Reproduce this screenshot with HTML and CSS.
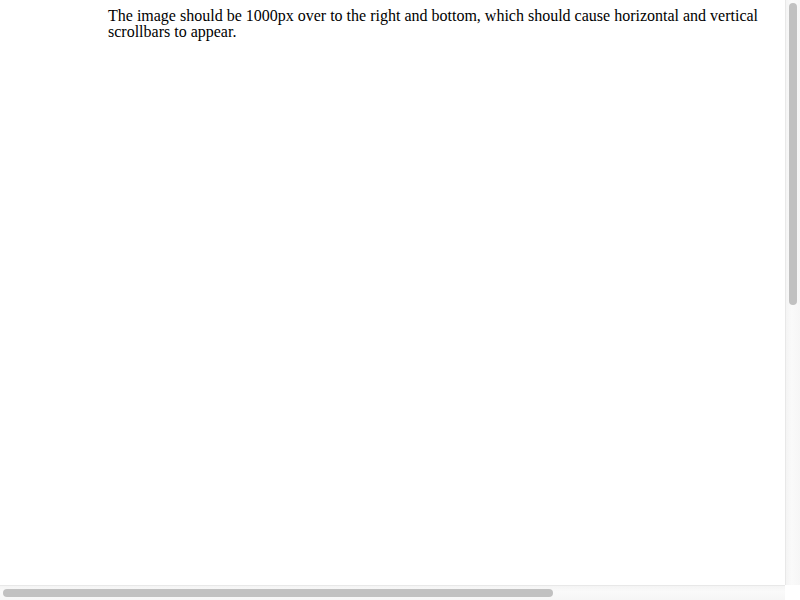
FILE: index.html
```html
<!DOCTYPE html>
<html>
<head>
<meta charset="utf-8">
<link rel="stylesheet" href="styles.css">
</head>
<body class="page">
<div class="window">
  <div class="viewport">
    <div class="pic-slot"></div>
    <div class="note">The image should be 1000px over to the right and bottom, which should cause horizontal and vertical scrollbars to appear.</div>
  </div>
  <div class="vtrack"><div class="vthumb"></div></div>
  <div class="htrack"><div class="hthumb"></div></div>
  <div class="corner"></div>
</div>
</body>
</html>
```
FILE: styles.css
```css
html, body {
  margin: 0;
  padding: 0;
  overflow: hidden;
}
.page {
  font-family: "Liberation Serif", "Times New Roman", serif;
  font-size: 16px;
  color: #000;
  background: #fff;
}
.window {
  display: grid;
  grid-template-columns: 785px 15px;
  grid-template-rows: 585px 15px;
  width: 800px;
  height: 600px;
}
.viewport {
  padding: 8px;
  overflow: hidden;
}
.pic-slot {
  float: left;
  width: 100px;
  height: 40px;
}
.note {
  line-height: 16px;
}
.vtrack {
  box-sizing: border-box;
  background: linear-gradient(to right, #f4f4f4, #fafafa 40%, #f6f6f6);
  border-left: 1px solid #e8e8e8;
  padding: 3px 3px 0 3px;
}
.vthumb {
  width: 8px;
  height: 302px;
  border-radius: 4px;
  background: #c1c1c1;
}
.htrack {
  box-sizing: border-box;
  background: linear-gradient(to bottom, #f4f4f4, #fafafa 40%, #f6f6f6);
  border-top: 1px solid #e8e8e8;
  padding: 3px 0 0 3px;
}
.hthumb {
  width: 550px;
  height: 8px;
  border-radius: 4px;
  background: #c1c1c1;
}
.corner {
  background: #fff;
}
```
